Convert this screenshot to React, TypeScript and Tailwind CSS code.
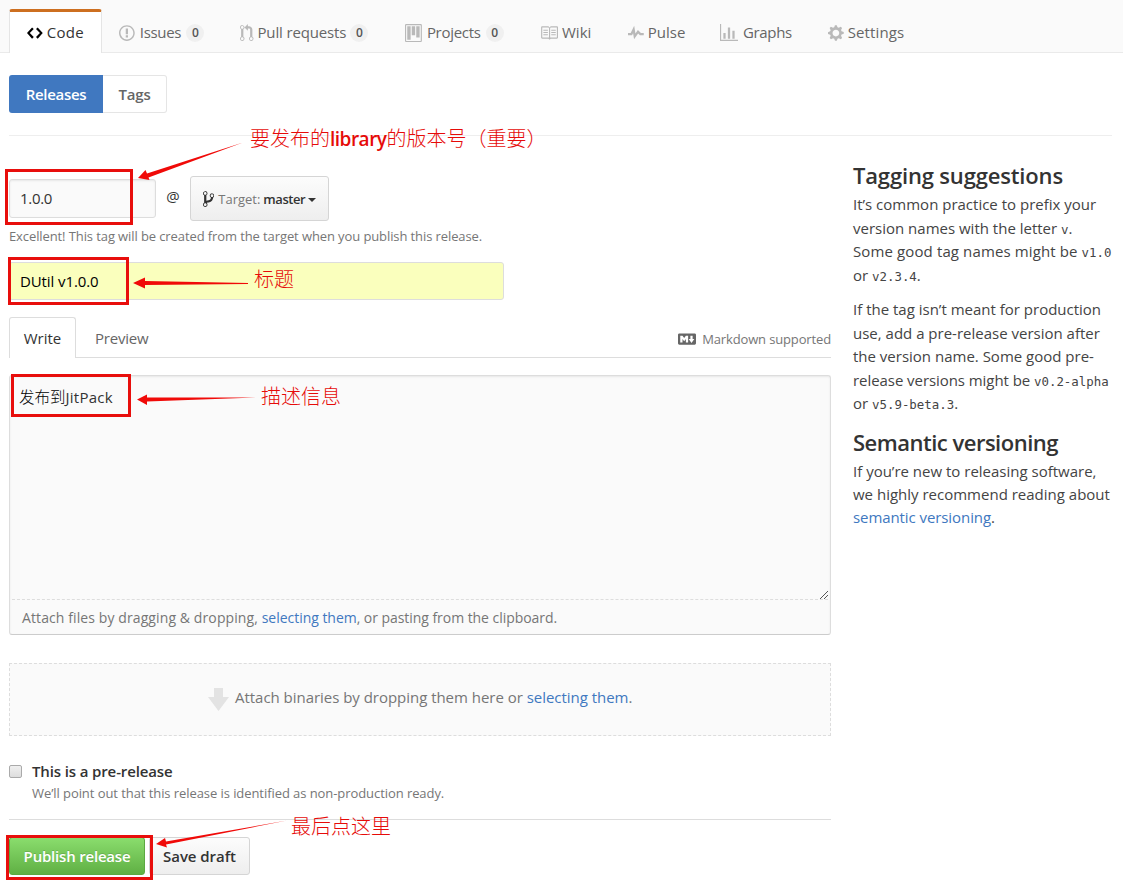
import { type ReactNode } from 'react';

const icons = {
  code: { w: 14, d: 'M9.5 3L8 4.5 11.5 8 8 11.5 9.5 13 14 8 9.5 3zm-5 0L0 8l4.5 5L6 11.5 2.5 8 6 4.5 4.5 3z' },
  issue: { w: 14, d: 'M7 2.3c3.14 0 5.7 2.56 5.7 5.7s-2.56 5.7-5.7 5.7A5.71 5.71 0 0 1 1.3 8c0-3.14 2.56-5.7 5.7-5.7zM7 1C3.14 1 0 4.14 0 8s3.14 7 7 7 7-3.14 7-7-3.14-7-7-7zm1 3H6v5h2V4zm0 6H6v2h2v-2z' },
  pull: { w: 12, d: 'M11 11.28V5c-.03-.78-.34-1.47-.94-2.06C9.46 2.35 8.78 2.03 8 2H7V0L4 3l3 3V4h1c.27.02.48.11.69.31.21.2.3.42.31.69v6.28A1.993 1.993 0 0 0 10 15a1.993 1.993 0 0 0 1-3.72zm-1 2.92c-.66 0-1.2-.55-1.2-1.2 0-.65.55-1.2 1.2-1.2.65 0 1.2.55 1.2 1.2 0 .65-.55 1.2-1.2 1.2zM4 3c0-1.11-.89-2-2-2a1.993 1.993 0 0 0-1 3.72v6.56A1.993 1.993 0 0 0 2 15a1.993 1.993 0 0 0 1-3.72V4.72c.59-.34 1-.98 1-1.72zm-.8 10c0 .66-.55 1.2-1.2 1.2-.65 0-1.2-.55-1.2-1.2 0-.65.55-1.2 1.2-1.2.65 0 1.2.55 1.2 1.2zM2 4.2C1.34 4.2.8 3.65.8 3c0-.65.55-1.2 1.2-1.2.65 0 1.2.55 1.2 1.2 0 .65-.55 1.2-1.2 1.2z' },
  project: { w: 15, d: 'M10 12h3V2h-3v10zm-4-2h3V2H6v8zm-4 4h3V2H2v12zm-1 1h13V1H1v14zM14 0H1a1 1 0 0 0-1 1v14a1 1 0 0 0 1 1h13a1 1 0 0 0 1-1V1a1 1 0 0 0-1-1z' },
  book: { w: 16, d: 'M3 5h4v1H3V5zm0 3h4V7H3v1zm0 2h4V9H3v1zm11-5h-4v1h4V5zm0 2h-4v1h4V7zm0 2h-4v1h4V9zm2-6v9c0 .55-.45 1-1 1H9.5l-1 1-1-1H2c-.55 0-1-.45-1-1V3c0-.55.45-1 1-1h5.5l1 1 1-1H15c.55 0 1 .45 1 1zm-8 .5L7.5 3H2v9h6V3.5zm7-.5H9.5l-.5.5V12h6V3z' },
  pulse: { w: 14, d: 'M11.5 8L8.8 5.4 6.6 8.5 5.5 1.6 2.38 8H0v2h3.6l.9-1.8.9 5.4L9 8.5l1.6 1.5H14V8h-2.5z' },
  graph: { w: 16, d: 'M16 14v1H0V0h1v14h15zM5 13H3V8h2v5zm4 0H7V3h2v10zm4 0h-2V6h2v7z' },
  gear: { w: 14, d: 'M14 8.77v-1.6l-1.94-.64-.45-1.09.88-1.84-1.13-1.13-1.81.91-1.09-.45-.69-1.92h-1.6l-.63 1.94-1.11.45-1.84-.88-1.13 1.13.91 1.81-.45 1.09L0 7.23v1.59l1.94.64.45 1.09-.88 1.84 1.13 1.13 1.81-.91 1.09.45.69 1.92h1.59l.63-1.94 1.11-.45 1.84.88 1.13-1.13-.92-1.81.47-1.09L14 8.75v.02zM7 11c-1.66 0-3-1.34-3-3s1.34-3 3-3 3 1.34 3 3-1.34 3-3 3z' },
  branch: { w: 10, d: 'M10 5c0-1.11-.89-2-2-2a1.993 1.993 0 0 0-1 3.72v.3c-.02.52-.23.98-.63 1.38-.4.4-.86.61-1.38.63-.83.02-1.48.16-2 .45V4.72a1.993 1.993 0 0 0-1-3.72C.88 1 0 1.89 0 3a2 2 0 0 0 1 1.72v6.56c-.59.35-1 .99-1 1.72 0 1.11.89 2 2 2 1.11 0 2-.89 2-2 0-.53-.2-1-.53-1.36.09-.06.48-.41.59-.47.25-.11.56-.17.94-.17 1.05-.05 1.95-.45 2.75-1.25S8.95 7.77 9 6.73h-.02C9.59 6.37 10 5.73 10 5zM2 1.8c.66 0 1.2.55 1.2 1.2 0 .65-.55 1.2-1.2 1.2C1.35 4.2.8 3.65.8 3c0-.65.55-1.2 1.2-1.2zm0 12.41c-.66 0-1.2-.55-1.2-1.2 0-.65.55-1.2 1.2-1.2.65 0 1.2.55 1.2 1.2 0 .65-.55 1.2-1.2 1.2zm6-8c-.66 0-1.2-.55-1.2-1.2 0-.65.55-1.2 1.2-1.2.65 0 1.2.55 1.2 1.2 0 .65-.55 1.2-1.2 1.2z' },
  markdown: { w: 16, d: 'M14.85 3H1.15C.52 3 0 3.52 0 4.15v7.69C0 12.48.52 13 1.15 13h13.69c.64 0 1.15-.52 1.15-1.15v-7.7C16 3.52 15.48 3 14.85 3zM9 11H7V8L5.5 9.92 4 8v3H2V5h2l1.5 2L7 5h2v6zm2.99.5L9.5 8H11V5h2v3h1.5l-2.51 3.5z' },
};

type IconName = keyof typeof icons;

function Icon({ name, className = '' }: { name: IconName; className?: string }) {
  const { w, d } = icons[name];
  return (
    <svg viewBox={`0 0 ${w} 16`} className={`h-[18px] w-auto shrink-0 ${className}`} fill="currentColor">
      <path fillRule="evenodd" d={d} />
    </svg>
  );
}

interface Tab {
  label: string;
  icon: IconName;
  width: string;
  gap: string;
  count?: number;
}

const tabs: Tab[] = [
  { label: 'Issues', icon: 'issue', width: 'w-[121px]', gap: 'gap-[5px] tracking-[-0.3px]', count: 0 },
  { label: 'Pull requests', icon: 'pull', width: 'w-[165px]', gap: 'gap-1 tracking-[-0.15px]', count: 0 },
  { label: 'Projects', icon: 'project', width: 'w-[135px]', gap: 'gap-[5px] tracking-[-0.3px]', count: 0 },
  { label: 'Wiki', icon: 'book', width: 'w-[88px]', gap: 'gap-1' },
  { label: 'Pulse', icon: 'pulse', width: 'w-[92px]', gap: 'gap-1' },
  { label: 'Graphs', icon: 'graph', width: 'w-[108px]', gap: 'gap-[5px] tracking-[-0.35px]' },
  { label: 'Settings', icon: 'gear', width: 'w-[100px]', gap: 'gap-1 tracking-[0.1px]' },
];

function RepoNav() {
  return (
    <nav className="flex h-[53px] items-end border-b border-[#eaeaea] bg-[#fafafa] pl-[9px]">
      <a className="-mb-px flex h-11 w-[93px] items-center gap-1 rounded-t-[3px] border-x border-t-[3px] border-x-[#e5e5e5] border-t-[#cd6f20] bg-white pl-[17px] text-[#333]">
        <Icon name="code" className="text-black" />
        <span className="tracking-[0.3px]">Code</span>
      </a>
      {tabs.map((tab) => (
        <a key={tab.label} className={`flex h-[38px] shrink-0 items-center whitespace-nowrap pl-[17px] text-[#666] ${tab.width} ${tab.gap}`}>
          <Icon name={tab.icon} className="text-[#b9b9b9]" />
          <span className="pb-0.5">{tab.label}</span>
          {tab.count !== undefined && (
            <span className="flex h-[18px] w-[18px] items-center justify-center rounded-full bg-[#f0f0f0] text-xs font-semibold text-[#555]">
              {tab.count}
            </span>
          )}
        </a>
      ))}
    </nav>
  );
}

function Code({ children }: { children: ReactNode }) {
  return <code className="font-['DejaVu_Sans_Mono',monospace] text-[12.4px] leading-none">{children}</code>;
}

function Sidebar() {
  return (
    <aside className="w-[262px] shrink-0 whitespace-nowrap pt-6 leading-[23.2px] text-[#444]">
      <h3 className="text-[22px] font-semibold leading-[31px] tracking-[-0.16px] text-[#333]">Tagging suggestions</h3>
      <p className="mt-[2px] leading-[23.6px]">
        It’s common practice to prefix your<br />
        version names with the letter <Code>v</Code>.<br />
        <span className="tracking-[0.12px]">Some good tag names might be </span><Code>v1.0</Code><br />
        or <Code>v2.3.4</Code>.
      </p>
      <p className="mt-[11px] leading-[23.4px]">
        If the tag isn’t meant for production<br />
        use, add a pre-release version after<br />
        the version name. Some good pre-<br />
        <span className="tracking-[-0.06px]">release versions might be </span><Code>v0.2-alpha</Code><br />
        or <Code>v5.9-beta.3</Code>.
      </p>
      <h3 className="mt-3 text-[22px] font-semibold leading-[31px] tracking-[-0.5px] text-[#333]">Semantic versioning</h3>
      <p className="mt-[2px] leading-[23px]">
        If you’re new to releasing software,<br />
        we highly recommend reading about<br />
        <a className="tracking-[-0.08px] text-[#4078c0]">semantic versioning</a>.
      </p>
    </aside>
  );
}

function ReleaseForm() {
  return (
    <form className="w-[822px] shrink-0 pt-10">
      <div className="flex h-[45px] items-center">
        <div className="flex h-[39px] w-[147px] items-center rounded-[3px] border border-[#ddd] bg-[#fafafa] pl-2.5 text-[#333] shadow-[inset_0_1px_2px_rgba(0,0,0,0.075)]">
          <span className="tracking-[-0.3px]">1.0.0</span>
        </div>
        <span className="w-[34px] pb-1 text-center text-[15px]">@</span>
        <button type="button" className="flex h-[45px] w-[139px] items-center rounded-[3px] border border-[#d5d5d5] bg-gradient-to-b from-[#fcfcfc] to-[#eee] pl-[12px] text-[13px]">
          <Icon name="branch" className="text-[#333]" />
          <span className="ml-1 pt-0.5 text-[#777]">Target:</span>
          <span className="ml-[3px] pt-0.5 font-semibold tracking-[-0.45px] text-[#333]">master</span>
          <span className="ml-[3px] mt-0.5 border-x-4 border-t-4 border-x-transparent border-t-[#333]" />
        </button>
      </div>
      <p className="mt-[5px] h-5 whitespace-nowrap text-[13px] leading-5 tracking-[-0.1px] text-[#767676]">
        Excellent! This tag will be created from the target when you publish this release.
      </p>
      <div className="mt-4 flex h-[38px] w-[495px] items-center rounded-[3px] border border-[#ddd] bg-[#faffbd] pl-2.5 text-black">
        <span className="tracking-[-0.1px]">DUtil v1.0.0</span>
      </div>

      <div className="mt-[17px] flex h-[41px] border-b border-[#ddd]">
        <a className="-mb-px flex w-[67px] items-center justify-center rounded-t-[3px] border border-b-0 border-[#ddd] bg-white text-[#333]">Write</a>
        <a className="flex items-center pt-0.5 pl-[19px] tracking-[-0.2px] text-[#666]">Preview</a>
        <div className="ml-auto flex items-center gap-[6px] whitespace-nowrap pt-1 text-[13px] tracking-[-0.14px] text-[#767676]">
          <Icon name="markdown" className="text-[#666]" />
          <span className="pt-0.5">Markdown supported</span>
        </div>
      </div>

      <div className="relative mt-[17px] flex h-[260px] flex-col rounded-[3px] border border-[#ddd] border-b-[#ccc] bg-[#fafafa] shadow-[inset_0_1px_2px_rgba(0,0,0,0.075)]">
        <p className="flex-1 pl-[9px] pt-[9px] leading-[22px] text-[#333]">
          <span className="font-['Noto_Sans_CJK_SC',sans-serif] text-[15.5px] font-light text-black">发布到</span>
          <span className="tracking-[0.25px]">JitPack</span>
        </p>
        <svg className="absolute right-px bottom-[34px] h-[10px] w-[10px]" viewBox="0 0 10 10" stroke="#555" fill="none">
          <path d="M1 9L9 1M5 9L9 5" />
        </svg>
        <p className="mx-[2px] h-[35px] whitespace-nowrap border-t border-dashed border-[#ddd] pl-[10px] text-[14px] leading-[35px] text-[#767676]">
          <span className="tracking-[0.1px]">Attach files by dragging &amp; dropping, </span>
          <a className="tracking-[-0.03px] text-[#4078c0]">selecting them</a>
          <span className="tracking-[-0.05px]">, or pasting from the clipboard.</span>
        </p>
      </div>

      <div className="mt-7 flex h-[73px] items-center whitespace-nowrap border border-dashed border-[#ddd] bg-[#fafafa] pl-[198px] pb-1 text-[#767676]">
        <svg className="mt-1 mr-[6px] h-[23px] w-[21px]" viewBox="0 0 21 23" fill="#e3e3e3">
          <path d="M6 0h9v9h6L10.500 23 0 9h6z" />
        </svg>
        <span className="tracking-[-0.03px]">Attach binaries by dropping them here or&nbsp;</span>
        <a className="tracking-[-0.03px] text-[#4078c0]">selecting them</a>.
      </div>

      <div className="mt-[25px] flex h-[42px] gap-[10px]">
        <span className="mt-1 h-[13px] w-[13px] rounded-[2px] border border-[#aaa] bg-gradient-to-b from-[#f0f0f0] to-[#ddd]" />
        <div className="whitespace-nowrap">
          <div className="h-5 font-semibold leading-5 tracking-[-0.13px] text-[#333]">This is a pre-release</div>
          <div className="h-[22px] text-[13px] leading-[24px] tracking-[-0.07px] text-[#767676]">
            We’ll point out that this release is identified as non-production ready.
          </div>
        </div>
      </div>

      <div className="mt-[16px] flex border-t border-[#ddd] pt-[17px]">
        <button type="button" className="h-[38px] w-[136px] whitespace-nowrap rounded-[3px] border border-[#5ca941] bg-gradient-to-b from-[#8add6d] to-[#60b044] font-semibold tracking-[-0.2px] text-white [text-shadow:0_-1px_0_rgba(0,0,0,0.15)]">
          Publish release
        </button>
        <button type="button" className="ml-1 h-[38px] w-[101px] whitespace-nowrap rounded-[3px] border border-[#d5d5d5] bg-gradient-to-b from-[#fcfcfc] to-[#eee] font-semibold tracking-[-0.05px] text-[#333]">
          Save draft
        </button>
      </div>
    </form>
  );
}

// red marker boxes, arrows and notes laid over the page
const boxes = [
  'left-[5px] top-[169px] w-[128px] h-[56px]',
  'left-[8px] top-[257px] w-[121px] h-[48px]',
  'left-[11px] top-[374px] w-[120px] h-[43px]',
  'left-[6px] top-[835px] w-[147px] h-[45px]',
];

const arrows = [
  '243,142.500 148.500,177.500 149.500,180 138,178 145.500,170 147,173.500',
  '248,284 145,285 145,288.500 133,283 145,277.500 145,281 248,283',
  '256,397.500 147,401.500 147,405 137,399.500 147,394.500 147,397.500',
  '287,820.500 166,844.500 167,847.500 156,844 165,838 166,841.500',
];

function Annotations() {
  return (
    <div className="pointer-events-none absolute inset-0 font-['Noto_Sans_CJK_SC',sans-serif] text-[20px] font-light leading-7 text-[#e60b09]">
      {boxes.map((box) => (
        <div key={box} className={`absolute border-3 border-[#e80e0c] ${box}`} />
      ))}
      <svg className="absolute inset-0 h-[885px] w-[1123px]" fill="#f00a08">
        {arrows.map((points) => (
          <polygon key={points} points={points} />
        ))}
      </svg>
      <span className="absolute left-[250px] top-[124px] whitespace-nowrap">
        要发布的<b className="font-['Open_Sans',sans-serif] text-[19px] font-semibold tracking-[-0.5px]">library</b>的版本号（重要）
      </span>
      <span className="absolute left-[254px] top-[265px] whitespace-nowrap">标题</span>
      <span className="absolute left-[261px] top-[382px] whitespace-nowrap">描述信息</span>
      <span className="absolute left-[291px] top-[812px] whitespace-nowrap">最后点这里</span>
    </div>
  );
}

export default function App() {
  return (
    <div className="relative h-[885px] w-[1123px] overflow-hidden bg-white font-['Open_Sans',sans-serif] text-[15px] text-[#333]">
      <RepoNav />
      <div className="w-[1112px] pl-[9px] pt-[22px]">
        <div className="flex h-[61px] items-start border-b border-[#eee]">
          <a className="flex h-[38px] w-[94px] items-center justify-center rounded-l-[3px] bg-[#4078c0] font-semibold tracking-[-0.3px] text-white">Releases</a>
          <a className="flex h-[38px] w-16 items-center justify-center rounded-r-[3px] border border-l-0 border-[#e5e5e5] font-semibold tracking-[-0.2px] text-[#666]">Tags</a>
        </div>
        <div className="flex gap-[22px]">
          <ReleaseForm />
          <Sidebar />
        </div>
      </div>
      <Annotations />
    </div>
  );
}
